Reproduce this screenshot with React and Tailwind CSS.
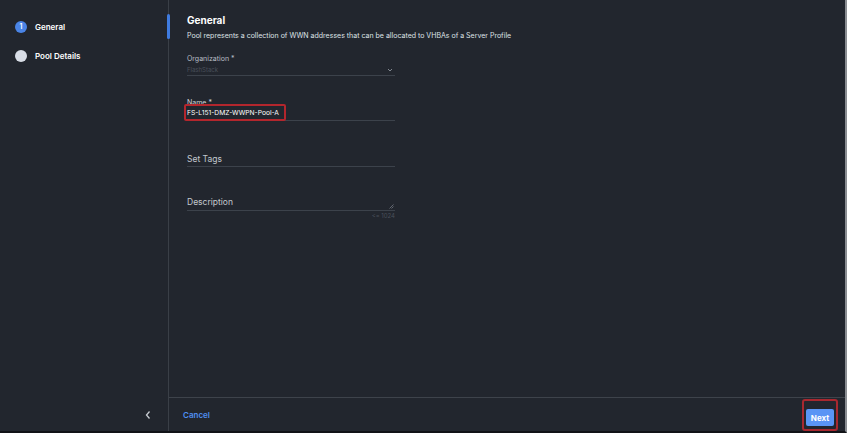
export default function App() {
    return (
        <div
            className="w-[847px] h-[433px] bg-[#22262e] flex overflow-hidden border-r-2 border-r-[#8a8d92] border-b-2 border-b-[#111317] text-white"
            style={{ fontFamily: "Inter, 'Liberation Sans', sans-serif" }}
        >
            {/* SIDEBAR */}
            <div className="w-[169px] flex flex-col border-r border-[#3a3f47] relative">
                <div className="absolute right-[-2px] top-[14px] w-[3px] h-[25px] bg-[#3f7be0] rounded-sm" />
                <div className="flex flex-col gap-[17px] pt-[21px] pl-[15px]">
                    <div className="flex items-center gap-[8px]">
                        <div className="w-[12px] h-[12px] rounded-full bg-[#4a84e6] flex items-center justify-center text-[7px] font-semibold">
                            1
                        </div>
                        <span className="text-[8px] font-semibold">General</span>
                    </div>
                    <div className="flex items-center gap-[8px]">
                        <div className="w-[12px] h-[12px] rounded-full bg-[#d8dde6]" />
                        <span className="text-[8px] font-semibold">Pool Details</span>
                    </div>
                </div>
                <div className="mt-auto flex justify-end pr-[16px] pb-[11px]">
                    <svg width="8" height="10" viewBox="0 0 8 10">
                        <path d="M5.5 1.5 L2.5 5 L5.5 8.5" stroke="#c8ccd2" strokeWidth="1.3" fill="none" />
                    </svg>
                </div>
            </div>

            {/* MAIN */}
            <div className="flex-1 flex flex-col">
                <div className="flex-1 pl-[18px] pt-[13px]">
                    <h2 className="text-[10px] font-bold leading-[14px]">General</h2>
                    <p className="text-[7px] text-[#dfe2e6] mt-[4px] leading-[10px]">
                        Pool represents a collection of WWN addresses that can be allocated to VHBAs of a Server Profile
                    </p>

                    <div className="w-[208px] mt-[13px]">
                        <div className="text-[7px] text-[#b9bec6] leading-[9px]">Organization *</div>
                        <div className="flex items-center justify-between border-b border-[#3c424b] h-[12px] mt-[1px]">
                            <span className="text-[6px] text-[#4a505a]">FlashStack</span>
                            <svg width="6" height="4" viewBox="0 0 6 4" className="mr-[2px]">
                                <path d="M1 1 L3 3 L5 1" stroke="#8c929b" strokeWidth="0.9" fill="none" />
                            </svg>
                        </div>
                    </div>

                    <div className="w-[208px] mt-[22px]">
                        <div className="text-[7px] text-[#d0d4da] leading-[9px]">Name *</div>
                        <div className="border-b border-[#3c424b] h-[13px] mt-[1px] relative">
                            <div className="absolute left-[-3px] top-[-4px] w-[102px] h-[17px] border-2 border-[#b3262d] rounded-[2px]" />
                            <span className="text-[6.7px] text-white leading-[11px] block">FS-L151-DMZ-WWPN-Pool-A</span>
                        </div>
                    </div>

                    <div className="w-[208px] mt-[32px]">
                        <div className="text-[8.5px] text-[#c3c8cf] leading-[12px] border-b border-[#3c424b] pb-[1px]">
                            Set Tags
                        </div>
                    </div>

                    <div className="w-[208px] mt-[29px]">
                        <div className="text-[8.5px] text-[#c3c8cf] leading-[12px] border-b border-[#3c424b] pb-[2px] relative">
                            Description
                            <svg width="5" height="5" viewBox="0 0 5 5" className="absolute right-[1px] bottom-[1px]">
                                <path d="M4.5 0.5 L0.5 4.5 M4.5 2.5 L2.5 4.5" stroke="#7c828b" strokeWidth="0.7" />
                            </svg>
                        </div>
                        <div className="text-right text-[6px] text-[#4a505a] mt-[0px]">&lt;= 1024</div>
                    </div>
                </div>

                {/* FOOTER */}
                <div className="h-[34px] border-t border-[#3e434b] flex items-center justify-between pl-[14px] pr-[7px]">
                    <button className="text-[8px] font-semibold text-[#4f8ff2]">Cancel</button>
                    <div className="border-2 border-[#a8282f] rounded-[3px] p-[2px]">
                        <button className="bg-[#5a95f5] text-white text-[8px] font-bold w-[28px] h-[17px] rounded-[2px]">
                            Next
                        </button>
                    </div>
                </div>
            </div>
        </div>
    );
}
